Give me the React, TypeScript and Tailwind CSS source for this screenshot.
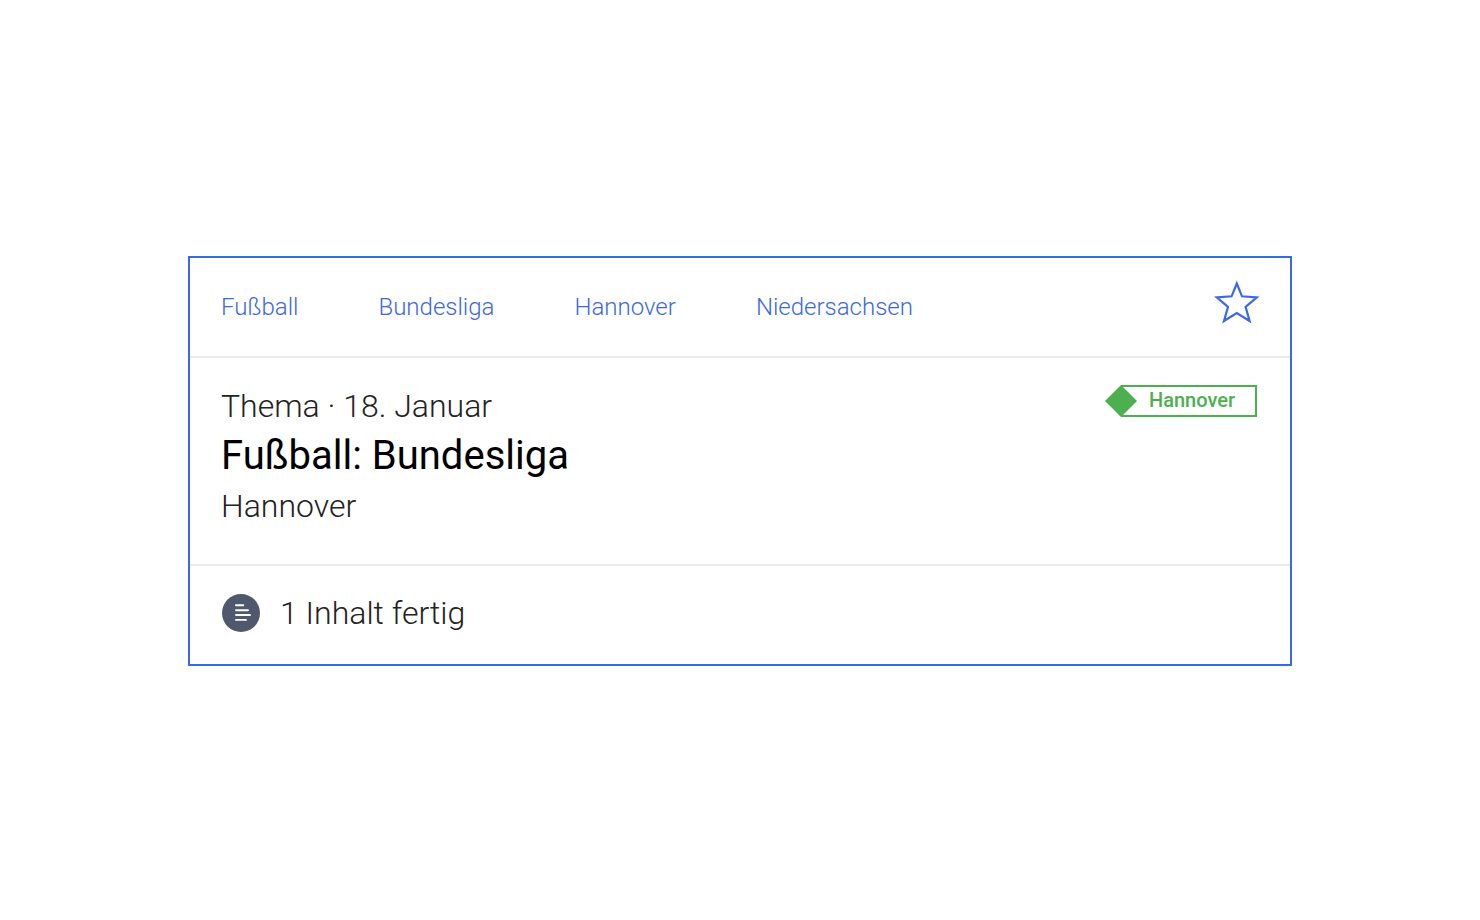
const tags = ["Fußball", "Bundesliga", "Hannover", "Niedersachsen"];

export default function App() {
  return (
    <div className="flex min-h-screen items-center bg-white px-[188px] pt-[2px] font-['Roboto','Liberation_Sans',sans-serif]">
      <article className="w-full border-2 border-[#3b68e4] font-light text-[#222222]">
        <header className="flex items-center justify-between pt-5 pr-[29px] pb-[30px] pl-[31px]">
          <nav className="flex gap-20 pt-[10px] text-2xl text-[#3b68e4]">
            {tags.map((tag) => (
              <a key={tag} href={`#${tag}`}>{tag}</a>
            ))}
          </nav>
          <button type="button" aria-label="Merken" className="text-[#3b68e4]">
            <svg className="size-12" viewBox="0 0 48 48" fill="none" stroke="currentColor" strokeWidth="2.2">
              <path d="M23.8 5.5L29 18.3L43.8 19.3L32.6 28.8L36.6 43L23.8 35L11 43L15 28.8L3.8 19.3L18.6 18.3Z" />
            </svg>
          </button>
        </header>
        <section className="flex items-start justify-between border-y-2 border-[#eaeaea] pt-[27px] pr-[33px] pb-[37px] pl-[31px]">
          <div>
            <p className="text-[32px] leading-[42px]">Thema · 18. Januar</p>
            <h2 className="text-[40px] leading-[58px] font-normal text-black">Fußball: Bundesliga</h2>
            <p className="text-[32px] leading-[42px]">Hannover</p>
          </div>
          <div className="relative ml-4 h-8 border-2 border-[#4caf50] pr-5 pl-[26px] text-xl leading-[27px] font-medium text-[#4caf50]">
            <svg className="absolute -top-[2px] -left-[18px] size-8" viewBox="0 0 32 32" fill="currentColor" aria-hidden="true">
              <path d="M16 0L32 16L16 32L0 16Z" />
            </svg>
            Hannover
          </div>
        </section>
        <footer className="flex items-center gap-5 px-8 pt-[27px] pb-[31px]">
          <svg className="size-[38px]" viewBox="0 0 38 38" aria-hidden="true">
            <circle cx="19" cy="19" r="19" fill="#4f586d" />
            <path d="M14 11.3H21.3M14 16.2H26M14 21H28M14 25.9H24" stroke="white" strokeWidth="1.9" strokeLinecap="round" />
          </svg>
          <p className="text-[32px] leading-10">1 Inhalt fertig</p>
        </footer>
      </article>
    </div>
  );
}
